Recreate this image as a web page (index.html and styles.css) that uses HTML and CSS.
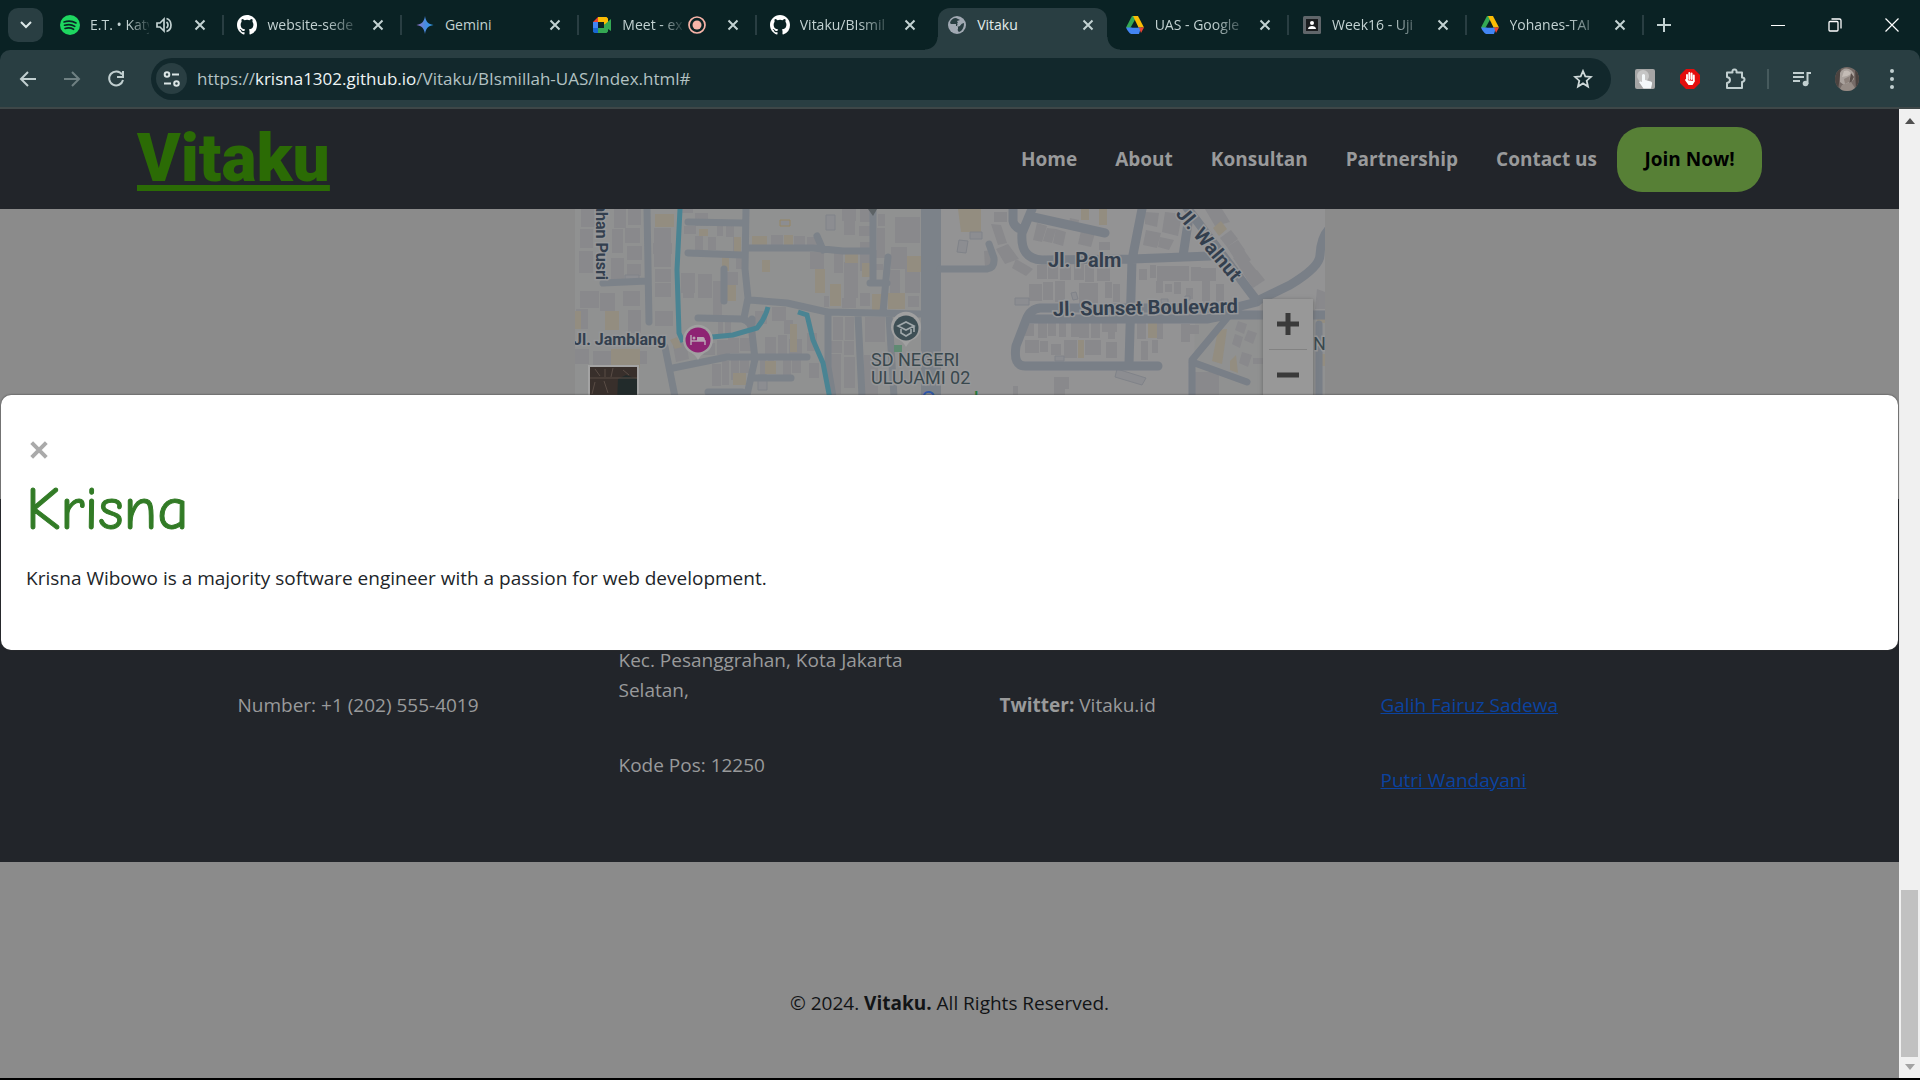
FILE: index.html
```html
<!DOCTYPE html>
<html lang="en">
<head>
<meta charset="utf-8">
<title>Vitaku</title>
<link rel="stylesheet" href="styles.css">
</head>
<body>
<svg class="defs" aria-hidden="true">
  <symbol id="x" viewBox="0 0 12 12"><path d="M1.5 1.5l9 9M10.500 1.500l-9 9" fill="none" stroke="currentColor" stroke-width="2"/></symbol>
  <symbol id="github" viewBox="0 0 16 16"><path fill="#fff" d="M8 0C3.580 0 0 3.580 0 8c0 3.540 2.290 6.530 5.470 7.590.4.070.55-.17.55-.38 0-.19-.01-.82-.01-1.490-2.010.37-2.530-.49-2.690-.94-.09-.23-.48-.94-.82-1.130-.28-.15-.68-.52-.01-.53.63-.01 1.080.58 1.230.82.72 1.210 1.870.87 2.330.66.070-.52.280-.87.510-1.070-1.780-.2-3.640-.89-3.640-3.950 0-.87.310-1.590.82-2.150-.08-.2-.36-1.020.080-2.120 0 0 .67-.21 2.200.82a7.600 7.600 0 0 1 4 0c1.530-1.040 2.200-.82 2.200-.82.44 1.100.16 1.920.080 2.120.51.560.82 1.270.82 2.150 0 3.070-1.870 3.750-3.650 3.950.29.250.54.730.54 1.480 0 1.070-.01 1.930-.01 2.200 0 .21.150.46.550.38A8 8 0 0 0 16 8c0-4.420-3.580-8-8-8z"/></symbol>
  <symbol id="drive" viewBox="0 0 20 20"><path fill="#34a853" d="M7 1h5L4.500 14.500 1 12.500z"/><path fill="#fbbc04" d="M8 1h5l6 11.500h-5.500z"/><path fill="#4285f4" d="M4 12.500h12L14 19H6c-2-1-4-4-5-6.500z"/><path fill="#ea4335" d="M14 12.500h5L16 18z"/><path fill="#0a2224" d="M10 7l3 5.500H7z"/></symbol>
</svg>

<header class="browser">
  <div class="titlebar">
    <button class="tab-search" aria-label="Search tabs"><svg width="12" height="8" viewBox="0 0 12 8"><path d="M1 1l5 5 5-5" fill="none" stroke="#dce8e8" stroke-width="2"/></svg></button>
    <nav class="tabs" aria-label="Tabs">
      <div class="tab">
        <svg class="fav" viewBox="0 0 20 20"><circle cx="10" cy="10" r="10" fill="#1ed760"/><path d="M4 7c4-1.300 8.500-1 12 1M4.500 10.300c3.500-1 7.500-.8 10.300 1M5 13.400c3-.8 6-.6 8.600.9" fill="none" stroke="#0a2224" stroke-width="1.600" stroke-linecap="round"/></svg>
        <span class="tab-title fade">E.T. • Katy</span>
        <svg class="state" viewBox="0 0 18 18"><path d="M2 7v4h3l4 4V3L5 7zM11.500 6c2 1.500 2 4.500 0 6M11.500 2.500c6 2 6 11 0 13" fill="none" stroke="#c3d2d2" stroke-width="1.700"/></svg>
        <button class="tab-close" aria-label="Close"><svg width="12" height="12"><use href="#x"/></svg></button>
      </div>
      <div class="tab">
        <svg class="fav"><use href="#github"/></svg><span class="tab-title fade">website-sede</span>
        <button class="tab-close" aria-label="Close"><svg width="12" height="12"><use href="#x"/></svg></button>
      </div>
      <div class="tab">
        <svg class="fav" viewBox="0 0 20 20"><defs><linearGradient id="gem"><stop offset="0" stop-color="#9a72c8"/><stop offset=".5" stop-color="#4a8be0"/><stop offset="1" stop-color="#2b9be8"/></linearGradient></defs><path fill="url(#gem)" d="M10 1c.8 5.500 3 8 8.500 9-5.500 1-7.700 3.500-8.500 9-.8-5.500-3-8-8.500-9C7 9 9.200 6.500 10 1z"/></svg><span class="tab-title">Gemini</span>
        <button class="tab-close" aria-label="Close"><svg width="12" height="12"><use href="#x"/></svg></button>
      </div>
      <div class="tab">
        <svg class="fav" viewBox="0 0 20 20"><path fill="#ea4335" d="M1 7l5-5v5z"/><path fill="#4285f4" d="M1 7h5v6H1z"/><path fill="#1967d2" d="M1 13h5v5H2.500L1 17z"/><path fill="#fbbc04" d="M6 2h8.500L16 3.500V8l-4 2V7H6z"/><path fill="#34a853" d="M6 13h6v-3l7-6v12l-3-2v2.500L14.500 18H6z"/></svg><span class="tab-title fade">Meet - ex</span>
        <svg class="state" viewBox="0 0 18 18"><circle cx="9" cy="9" r="8" fill="none" stroke="#f7b4a8" stroke-width="1.700"/><circle cx="9" cy="9" r="4.500" fill="#f7b4a8"/></svg>
        <button class="tab-close" aria-label="Close"><svg width="12" height="12"><use href="#x"/></svg></button>
      </div>
      <div class="tab no-line">
        <svg class="fav"><use href="#github"/></svg><span class="tab-title fade">Vitaku/BIsmil</span>
        <button class="tab-close" aria-label="Close"><svg width="12" height="12"><use href="#x"/></svg></button>
      </div>
      <div class="tab active no-line">
        <svg class="fav" viewBox="0 0 20 20"><circle cx="10" cy="10" r="9" fill="#a1a9b3"/><path fill="#293e42" d="M9 3c-3 0-5.500 2-6 5l3 3h4l1-3-1-2 3-1zM17 8l-3 1-1 2-3 1 1 4 1 1c3-1 5-4 5-9z"/><path fill="#a1a9b3" d="M4 9h5v3h2v2l-3 2-4-3zM12 6l3 1-1 3-4-1z"/></svg><span class="tab-title">Vitaku</span>
        <button class="tab-close" aria-label="Close"><svg width="12" height="12"><use href="#x"/></svg></button>
      </div>
      <div class="tab">
        <svg class="fav"><use href="#drive"/></svg><span class="tab-title fade">UAS - Google</span>
        <button class="tab-close" aria-label="Close"><svg width="12" height="12"><use href="#x"/></svg></button>
      </div>
      <div class="tab">
        <svg class="fav" viewBox="0 0 20 20"><rect x="1" y="1" width="18" height="18" rx="1.500" fill="#60666a"/><path fill="#1b1d1f" d="M4 4h12v12H4z"/><circle cx="10" cy="8" r="2" fill="#fff"/><path fill="#fff" d="M6 14c0-4 8-4 8 0z"/></svg><span class="tab-title fade">Week16 - Uji</span>
        <button class="tab-close" aria-label="Close"><svg width="12" height="12"><use href="#x"/></svg></button>
      </div>
      <div class="tab">
        <svg class="fav"><use href="#drive"/></svg><span class="tab-title fade">Yohanes-TAI</span>
        <button class="tab-close" aria-label="Close"><svg width="12" height="12"><use href="#x"/></svg></button>
      </div>
    </nav>
    <button class="new-tab" aria-label="New tab"><svg width="14" height="14"><path d="M7 0v14M0 7h14" stroke="currentColor" stroke-width="2"/></svg></button>
    <div class="window-controls">
      <button aria-label="Minimize"><svg width="14" height="14"><path d="M0 7.500h14" stroke="#fff"/></svg></button>
      <button aria-label="Restore"><svg width="14" height="14" fill="none" stroke="#fff" stroke-width="1.300"><rect x="1" y="3.500" width="9" height="9.500" rx="1"/><path d="M3.500 1h8q1.500 0 1.500 1.500v8"/></svg></button>
      <button aria-label="Close window"><svg width="14" height="14"><path d="M.5.5l13 13M13.500.5l-13 13" stroke="#fff" stroke-width="1.200"/></svg></button>
    </div>
  </div>

  <div class="toolbar">
    <div class="history">
      <button aria-label="Back"><svg width="18" height="18" viewBox="0 0 18 18" fill="none" stroke="#c1cfd0" stroke-width="2"><path d="M17 9H2M9 2L2 9l7 7"/></svg></button>
      <button aria-label="Forward"><svg width="18" height="18" viewBox="0 0 18 18" fill="none" stroke="#6f8082" stroke-width="2"><path d="M1 9h15M9 2l7 7-7 7"/></svg></button>
      <button aria-label="Reload"><svg width="18" height="18" viewBox="0 0 18 18" fill="none" stroke="#c1cfd0" stroke-width="2"><path d="M15 4.500A7 7 0 1 0 16 10M16 1v6h-6"/></svg></button>
    </div>
    <div class="omnibox">
      <button class="site-info" aria-label="Site information"><svg width="18" height="18" viewBox="0 0 18 18" fill="none" stroke="#dbe5e5" stroke-width="2"><circle cx="4" cy="4.500" r="2.300"/><path d="M9 4.500h7M1 13.500h7"/><circle cx="13.500" cy="13.500" r="2.300"/></svg></button>
      <a class="url" href="#">https://<b>krisna1302.github.io</b>/Vitaku/BIsmillah-UAS/Index.html#</a>
      <button class="star" aria-label="Bookmark"><svg width="20" height="20" viewBox="0 0 20 20"><path d="M10 2l2.300 5.400 5.700.5-4.300 3.800 1.300 5.800-5-3.100-5 3.100 1.300-5.800L2 7.900l5.700-.5z" fill="none" stroke="#cfd9d9" stroke-width="1.800"/></svg></button>
    </div>
    <div class="extensions">
      <button aria-label="Click extension"><svg width="22" height="22" viewBox="0 0 22 22"><rect x="1" y="1" width="20" height="20" rx="2" fill="#a5a5a5"/><circle cx="9" cy="8" r="6" fill="#c6c6c6"/><path fill="#f4f8fa" d="M8 7q1.500-2 3 0v5l6 1.500q1.500.5 1 2.500l-1 4.500H9.500L5 14q1-1.500 3 0z"/></svg></button>
      <button aria-label="Ad blocker"><svg width="22" height="22" viewBox="0 0 22 22"><path fill="#e40d0d" d="M7 1h8l6 6v8l-6 6H7l-6-6V7z"/><path d="M8 13V7M10.300 11V5M12.600 11V5.500M14.800 12V7.500M7 12l3 4h3l2-3" stroke="#fff" stroke-width="1.900" stroke-linecap="round" fill="#fff"/></svg></button>
      <button aria-label="Extensions"><svg width="22" height="22" viewBox="0 0 22 22"><path d="M3 4.500h5.500q-.5-3 2-3t2 3H18v5q2.500 0 2.500 2T18 14v6H3v-5q3-.5 3-3T3 9z" fill="none" stroke="#c1cfd0" stroke-width="2" stroke-linejoin="round"/></svg></button>
      <span class="divider"></span>
      <button aria-label="Media controls"><svg width="22" height="22" viewBox="0 0 22 22"><path d="M2 5h11M2 9h11M2 13h7M16.500 16V5H20" fill="none" stroke="#c1cfd0" stroke-width="2"/><circle cx="14.500" cy="15.500" r="2.800" fill="#c1cfd0"/></svg></button>
      <button aria-label="Profile"><svg width="24" height="24" viewBox="0 0 24 24"><defs><clipPath id="av"><circle cx="12" cy="12" r="12"/></clipPath></defs><g clip-path="url(#av)"><path fill="#766b67" d="M0 0h24v24H0z"/><path fill="#4b4340" d="M0 0h6L3 24H0zM20 0h4v24h-3z"/><path fill="#aaa29d" d="M5 6q3-6 9-4 6 2 5 10l-4 5-6 1-4-3z"/><path fill="#c4bcb6" d="M9 4q5-2 7 3l-4 2-5 1z"/><path fill="#8d827c" d="M9 12l6-3-1 6-4 2z"/><path fill="#5a504c" d="M16 6l3 4-3 6-2 1z"/><path fill="#958b85" d="M7 18l9-3 6 9H4z"/></g></svg></button>
      <button aria-label="Menu"><svg width="22" height="22" viewBox="0 0 22 22" fill="#c1cfd0"><circle cx="11" cy="3" r="2"/><circle cx="11" cy="11" r="2"/><circle cx="11" cy="19" r="2"/></svg></button>
    </div>
  </div>
</header>

<div class="viewport">
  <div class="page">
    <nav class="navbar">
      <a class="logo" href="#">Vitaku</a>
      <div class="menu">
        <a href="#">Home</a><a href="#">About</a><a href="#">Konsultan</a><a href="#">Partnership</a><a href="#">Contact us</a>
        <button class="join">Join Now!</button>
      </div>
    </nav>

    <section class="location">
      <div class="map">
        <svg class="map-art" viewBox="0 0 750 290" role="img" aria-label="Map">
          <path fill="#939394" d="M0 0h750v290H0z"/>
          <path fill="#909191" d="M0 0h346v290H0zM620 108h130v182H617z"/>
          <g fill="#89898c">
            <path d="M6 0h15v18H6zM39 0h12v19H39zM53 0h13v16H53zM37 20h11v24H37zM50 19h15v15H50zM52 37h15v14H52zM36 49h13v23H36zM5 20h13v19H5zM4 42h14v22H4zM52 55h14v12H52zM5 82h19v17H5zM25 84h15v18H25zM48 82h17v15H48zM53 101h13v23H53zM1 100h12v20H1zM0 140h14v15H0zM18 142h22v17H18zM60 142h12v13H60z"/>
            <path d="M79 19h17v15H79zM78 34h19v11H78zM79 45h17v13H79zM80 60h16v13H80zM80 74h16v14H80zM80 102h18v15H80zM107 0h11v4h-11zM109 17h12v8h-12zM120 4h13v13h-13zM142 15h6v12h-6zM151 16h8v12h-8zM120 27h8v18h-8zM133 28h8v13h-8zM106 64h14v20h-14zM123 65h14v24h-14zM138 72h9v34h-9zM150 63h13v13h-13zM158 28h8v20h-8zM161 46h9v14h-9zM108 81h11v8h-11zM143 112h5v14h-5zM150 112h6v13h-6z"/>
            <path d="M196 26h12v11h-12zM219 27h11v11h-11zM232 28h14v10h-14zM235 43h14v17h-14zM259 40h9v24h-9zM267 0h14v12h-14zM269 12h11v14h-11zM284 17h14v10h-14zM285 33h10v16h-10zM285 0h12v13h-12zM303 5h7v12h-7zM302 19h8v23h-8zM301 41h9v8h-9zM269 53h14v36h-14zM285 48h11v14h-11zM297 55h11v6h-11zM320 8h25v26h-25zM316 38h16v22h-16zM315 61h10v25h-10zM330 58h15v26h-15zM267 89h14v10h-14zM285 84h10v13h-10zM333 87h11v11h-11zM249 87h5v11h-5z"/>
            <path d="M180 102h12v13h-12zM197 98h14v14h-14zM209 111h9v14h-9zM190 128h11v17h-11zM203 126h9v20h-9zM214 130h13v15h-13zM232 124h10v18h-10zM142 131h13v15h-13zM153 129h11v15h-11zM165 129h12v13h-12zM128 134h12v12h-12zM137 155h9v22h-9zM147 152h7v24h-7zM156 151h8v20h-8zM165 149h9v15h-9zM185 151h6v17h-6zM193 150h6v15h-6zM208 151h8v17h-8zM217 151h9v13h-9zM234 154h10v15h-10zM258 108h10v23h-10zM270 108h9v23h-9zM290 108h20v25h-20zM256 132h11v12h-11zM269 132h10v14h-10zM256 145h10v40h-10zM269 148h11v31h-11zM289 146h14v40h-14zM97 130l14 4 3 16-13 3z"/>
            <path d="M419 3h13v10h-13zM416 15l10 1 6 18-9 2zM421 40l12-5 11 15-14 5zM441 50l17 10-7 7-14-8zM409 42l10-1v17h-9zM462 14l10 3-5 16-9-2zM472 19l9 1-4 14-9-2zM481 20l10 3-3 14-10-3zM495 9l9 2-2 11-9-2zM506 22l14 2-4 14-13-3zM524 33h11v8h-11zM570 3l14 1-2 14-12-3zM590 3l17 2-4 22-16-4zM571 21l15 3-4 15-14-3zM585 28l14 3-5 10-11-3z"/>
            <path d="M462 56h10v14h-10zM473 57h10v13h-10zM485 56h11v15h-11zM499 53h10v18h-10zM510 56h9v17h-9zM522 58h13v14h-13zM454 75h13v17h-13zM468 73h10v18h-10zM480 72h10v21h-10zM504 74h19v23h-19zM530 73h7v16h-7zM538 75h7v18h-7zM564 60h8v11h-8zM575 56h6v13h-6zM582 57h32v15h-32zM616 58h10v14h-10zM624 59h17v13h-17zM581 72h7v12h-7zM590 75h7v8h-7zM599 73h7v12h-7zM611 79h7v11h-7zM627 71h8v25h-8zM641 75h8v18h-8z"/>
            <path d="M450 115h9v12h-9zM463 113h9v16h-9zM473 113h8v14h-8zM484 112h7v16h-7zM496 112h8v16h-8zM504 112h10v17h-10zM516 112h9v17h-9zM527 114h15v9h-15zM533 122h7v8h-7zM450 131h14v13h-14zM465 132h8v11h-8zM476 135h10v11h-10zM489 131h13v18h-13zM510 131h16v15h-16zM531 133h11v16h-11zM562 114h9v16h-9zM582 112h6v18h-6zM566 132h7v19h-7zM577 131h6v13h-6zM606 115h9v18h-9zM613 116h11v9h-11zM620 163h24v25h-24zM479 168h15v12h-4v15h-11zM438 177h5v12h-5z"/>
            <path d="M630 0h17l8 13-15 4zM645 29l11-8 7 9-11 8zM652 38l11-7 7 10-11 8zM658 49l11-8 7 10-11 8zM664 59l10-7 8 10-10 8zM671 69l11-8 8 10-12 8zM663 112l9 3-3 10-9-4zM660 125l8 3-3 11-8-4zM673 121l9 3-4 11-9-4zM667 143l10 3-4 12-9-4zM678 149h10v6h-10zM742 80l8 3v17h-10z"/>
          </g>
          <g fill="#938d80">
            <path d="M80 5h19v13H80zM124 20h9v7h-9zM159 28h7v16h-7zM147 48h7v14h-7zM149 76h12v16h-12zM177 27h15v10h-15zM209 26h9v13h-9zM187 51h8v12h-8zM240 60h10v24h-10zM255 75h11v22h-11zM270 42h13v12h-13zM287 54h8v14h-8zM332 47h14v16h-14zM297 85h10v16h-10zM313 84h17v16h-17zM30 102h14v19H30zM0 102h6v18H0zM36 140h29v19H36zM95 131l7-3 5 10-7 2zM215 115h7v28h-7zM190 152h11v13h-11zM158 164h13v12h-13zM383 0h23v23h-20z"/>
            <path d="M506 0h8v11h-8zM524 0h8v16h-8zM638 19l8-7 6 8-8 7zM573 114h9v15h-9zM503 131h6v18h-6zM643 121l9-1-5 35-10-3zM655 152l6-6 2 18-8-3zM742 105h8v9h-8zM745 145h5v12h-5z"/>
          </g>
          <g fill="#8c8d91" stroke="#808389"><path d="M251 6h9v15h-9zM50 66h14v5H50zM183 166h9v15h-9zM384 31l9 1-2 12-9-1zM395 23h12v7h-12zM440 89h14v7h-14zM496 84l5-1 2 7-5 1zM586 90h7v4h-7zM610 87h5v4h-5zM542 160l29 9-4 7-27-8zM480 147h9v5h-9z"/><path d="M205 11h10v6h-10z" stroke="#958665"/></g>
          <g fill="none" stroke="#7c8289" stroke-width="7" stroke-linecap="round" stroke-linejoin="round">
            <path d="M72 0l2 113M28 74l44-2M113 13l54 1M171 0l-1 60 3 29-4 20M177 110v14l3 26-8 36M113 44l54 2M172 39h66l30 3h30M242 27l6 14M298 0v73M295 74h17M313 48l-5 55M175 91l37 3 40 9 93 2M253 103v55l5 30M283 106l4 82M314 106l5 82M123 109l44 1q10 2 10 14M98 159l54-11h80M90 138l10 50M133 183h34M178 169h38M149 60v32"/>
            <path d="M356-10v300" stroke-width="20"/>
            <path d="M365 60h47q8-1 7-11l-5-14"/>
          </g>
          <g fill="none" stroke="#797f87" stroke-width="9" stroke-linecap="round" stroke-linejoin="round">
            <path d="M438 0v12q1 6 9 9M457 0l-10 24q-2 26 20 27l90-1 78-3M458 8l72 16M567 0l-10 51-3 104M613 14l-5 33M610-4l72 96M682 92l33-16q30-18 30-30 1-18 9-26M682 93l-24 6H465q-10 1-14 12l-10 26q-3 20 9 20h133M455 110h177q20-4 24-4h100"/>
            <path d="M652 109l-35 42v50M617 153l55 20M744 115v80" stroke-width="7"/>
          </g>
          <g fill="none" stroke="#4a8493" stroke-width="5">
            <path d="M105 0l-3 61 2 63 4 9M137 128l21-2 24-7q8-9 11-21M223 103l9 3 6 25 10 23 7 36"/>
          </g>
          <g class="road-label">
            <text x="473" y="58">Jl. Palm</text>
            <text x="478" y="107" transform="rotate(-1 478 107)">Jl. Sunset Boulevard</text>
            <text x="600" y="5" transform="rotate(50 600 5)">Jl. Walnut</text>
            <g class="narrow">
              <text x="-2" y="136">Jl. Jamblang</text>
              <text x="71" y="-21" transform="rotate(90)" text-anchor="end">ahan Pusri</text>
            </g>
          </g>
          <g class="place-label">
            <text x="296" y="157">SD NEGERI</text><text x="296" y="175">ULUJAMI 02</text><text x="738" y="141">Ne</text>
          </g>
          <g class="google"><text x="346" y="198"><tspan fill="#2f57a8">G</tspan><tspan fill="#9c302b">o</tspan><tspan fill="#a27d16">o</tspan><tspan fill="#2f57a8">g</tspan><tspan fill="#237b3b">l</tspan><tspan fill="#9c302b">e</tspan></text></g>
          <path fill="#5c6265" d="M293 0h9l-4 7z"/>
          <path fill="#5f8a72" d="M319 136h8v7h-8z"/>
          <path fill="#a0a0a0" d="M123 151q-3-6-10-9a15 15 0 1 1 20 0q-7 3-10 9z"/><circle cx="123" cy="131" r="12.500" fill="#8e2373"/>
          <path d="M116 126v10M130 136v-4h-14" stroke="#b8a3b2" stroke-width="1.500" fill="none"/><path fill="#b8a3b2" d="M122 128h6q2 0 2 4h-8z"/><circle cx="119" cy="129" r="1.500" fill="#b8a3b2"/>
          <path fill="#a0a0a0" d="M331 138q-3-6-10-9a15 15 0 1 1 20 0q-7 3-10 9z"/><circle cx="331" cy="119" r="12.500" fill="#3e4f55"/>
          <path d="M323 117l8-4 8 4-8 4zM326 120v4l5 3 5-3v-4M339 117v6" fill="none" stroke="#a0a8ab" stroke-width="1.600"/>
          <path fill="#a3a3a3" d="M13 156h51v50H13z"/><path fill="#382f2b" d="M15 158h47v47H15z"/><path fill="#222b2b" d="M43 170l8-4 11 4v24H42z"/><path d="M15 169h47M20 160l5 7M30 160v8M38 159l-2 9M48 161l6 5M20 173l-3 12M29 172l4 12" stroke="#594c45" fill="none"/>
        </svg>
        <div class="map-zoom">
          <button aria-label="Zoom in"><svg width="22" height="22"><path d="M11 0v22M0 11h22" stroke="#3a3a3a" stroke-width="5"/></svg></button>
          <button aria-label="Zoom out"><svg width="22" height="22"><path d="M0 11h22" stroke="#3a3a3a" stroke-width="5"/></svg></button>
        </div>
      </div>
    </section>

    <section class="contacts">
      <div class="columns">
        <div class="column low"><p>Number: +1 (202) 555-4019</p></div>
        <div class="column"><p>Kec. Pesanggrahan, Kota Jakarta<br>Selatan,</p><p>Kode Pos: 12250</p></div>
        <div class="column low"><p><b>Twitter:</b> Vitaku.id</p></div>
        <div class="column low"><p><a href="#">Galih Fairuz Sadewa</a></p><p><a href="#">Putri Wandayani</a></p></div>
      </div>
    </section>

    <footer class="copyright"><p>© 2024. <b>Vitaku.</b> All Rights Reserved.</p></footer>

    <div class="modal" role="dialog" aria-labelledby="person">
      <button class="modal-close" aria-label="Close dialog"><svg width="18" height="18" viewBox="0 0 16 16"><path d="M1.500 1.500l13 13M14.500 1.500l-13 13" stroke="#aaa" stroke-width="3.500"/></svg></button>
      <h1 id="person">Krisna</h1>
      <p>Krisna Wibowo is a majority software engineer with a passion for web development.</p>
    </div>
  </div>
  <div class="scrollbar">
    <svg width="10" height="6"><path fill="#505050" d="M0 6l5-6 5 6z"/></svg>
    <span class="thumb"></span>
    <svg width="10" height="6"><path fill="#a3a3a3" d="M0 0h10L5 6z"/></svg>
  </div>
</div>
</body>
</html>
```
FILE: styles.css
```css
* { box-sizing: border-box; }
body {
  margin: 0;
  min-height: 100vh;
  display: flex;
  flex-direction: column;
  border-bottom: 2px solid #000;
  font: 19px/30px "Segoe UI", "Open Sans", "Noto Sans", sans-serif;
  color: #121416;
}
button { border: 0; padding: 0; background: none; font: inherit; color: inherit; display: grid; place-items: center; }
svg { display: block; flex: none; }
p { margin: 0; }
.defs { position: absolute; width: 0; height: 0; }

/* Browser frame */
.browser { background: #0a2224; color: #c3d2d2; border-bottom: 2px solid #3e4748; }
.titlebar { height: 50px; display: flex; align-items: center; padding-left: 8px; }
.tab-search { width: 35px; height: 34px; margin-right: 4px; border-radius: 10px; background: #293e42; flex: none; }
.tabs { flex: 0 1 1597px; min-width: 0; display: flex; align-self: stretch; }
.tab { flex: 1 1 0; min-width: 0; display: flex; align-items: center; padding: 0 18px 0 13px; position: relative; }
.tab::after { content: ""; position: absolute; right: 0; top: 15px; width: 2px; height: 20px; background: #293e42; }
.no-line::after { display: none; }
.fav { width: 20px; height: 20px; margin-right: 10px; }
.tab-title { flex: 1 1 0; min-width: 0; white-space: nowrap; font-size: 14px; line-height: 20px; }
.fade { mask-image: linear-gradient(to right, #000 65%, rgba(0, 0, 0, 0.15)); }
.active .tab-title { color: #e3ecec; }
.state { width: 18px; height: 18px; margin-left: 6px; margin-right: 7px; }
.tab-close { width: 12px; height: 20px; margin-left: 14px; flex: none; }
.active { margin-top: 8px; padding-bottom: 8px; z-index: 0; }
.active::before {
  content: ""; position: absolute; inset: 0 -8px 0 -9px; z-index: -1;
  background:
    radial-gradient(circle at 0 0, transparent 12px, #293e42 13px) left bottom / 13px 13px no-repeat,
    radial-gradient(circle at 100% 0, transparent 12px, #293e42 13px) right bottom / 13px 13px no-repeat;
}
.active::after { content: ""; display: block; inset: 0 5px 0 4px; width: auto; height: auto; border-radius: 12px 12px 0 0; z-index: -1; }
.new-tab { width: 40px; height: 34px; }
.window-controls { margin-left: auto; display: flex; }
.window-controls button { width: 57px; height: 50px; }

.toolbar { height: 57px; display: flex; align-items: center; background: #293e42; border-radius: 10px 10px 0 0; padding: 0 6px; }
.history { display: flex; width: 145px; }
.history button { width: 44px; height: 40px; }
.omnibox { flex: 1; height: 42px; display: flex; align-items: center; padding: 0 18px 0 5px; border-radius: 21px; background: #12282c; }
.site-info { width: 31px; height: 31px; border-radius: 50%; background: #293e42; margin-right: 10px; }
.url { flex: 1; color: #b3c2c3; text-decoration: none; font-size: 17px; }
.url b { font-weight: 400; color: #eef5f5; }
.extensions { display: flex; align-items: center; padding-left: 11px; }
.extensions button { width: 45px; height: 40px; }
.divider { width: 2px; height: 20px; margin: 0 10px; background: #465a5d; }

/* Web page */
.viewport { flex: 1; display: flex; }
.page { flex: 1; min-width: 0; display: flex; flex-direction: column; position: relative; background: #8b8b8b; }
.navbar { height: 100px; background: #22252a; display: flex; align-items: center; justify-content: space-between; padding: 0 137px; }
.logo {
  font: 900 66px/72px Roboto, sans-serif; color: #2b6b05;
  text-decoration: underline; text-decoration-thickness: 6px; text-underline-offset: 4px; text-decoration-skip-ink: none;
}
.menu { display: flex; align-items: center; gap: 38px; font-weight: 700; }
.menu a { color: #999a9b; text-decoration: none; }
.join { width: 145px; height: 65px; margin-left: -18px; border-radius: 25px; background: #578036; color: #000; }

.location { height: 290px; display: flex; justify-content: center; }
.map { width: 750px; position: relative; overflow: hidden; }
.map-art { width: 100%; height: 100%; }
.road-label { font: 700 20px Roboto, sans-serif; fill: #333f4e; stroke: #969799; stroke-width: 3px; paint-order: stroke; }
.narrow { font-size: 16px; }
.place-label { font: 400 18px Roboto, sans-serif; fill: #39484d; stroke: #969799; stroke-width: 3px; paint-order: stroke; }
.google { font: 400 22px Roboto, sans-serif; }
.map-zoom { position: absolute; top: 90px; right: 12px; width: 50px; background: #989898; box-shadow: 0 1px 4px #666; }
.map-zoom button { width: 38px; height: 50px; margin: 0 auto; }
.map-zoom button + button { border-top: 1px solid #828282; }

.contacts { min-height: 363px; padding-top: 146px; background: #22252a; color: #999a9b; }
.columns { max-width: 1524px; margin: 0 auto; display: grid; grid-template-columns: repeat(4, 1fr); }
.column { padding-left: 50px; display: flex; flex-direction: column; gap: 45px; white-space: nowrap; }
.low { padding-top: 45px; }
.contacts a { color: #0b43a0; }
.copyright { flex: 1; padding-top: 126px; text-align: center; }

.modal { position: absolute; top: 286px; left: 1px; right: 1px; height: 255px; padding: 46px 25px; background: #fff; border-radius: 10px; box-shadow: 0 0 2px #333; color: #212529; }
.modal-close { width: 25px; height: 18px; }
.modal h1 { margin: 20px 0 24px; font: 400 61px/60px "Comic Sans MS", "Comic Neue", Lato, sans-serif; color: #327b26; -webkit-text-stroke: 1px #327b26; }

.scrollbar { width: 21px; background: #f0f0f0; display: flex; flex-direction: column; align-items: center; padding: 9px 0 8px; }
.thumb { width: 17px; height: 167px; margin-top: auto; margin-bottom: 7px; background: #c1c1c1; }
```
